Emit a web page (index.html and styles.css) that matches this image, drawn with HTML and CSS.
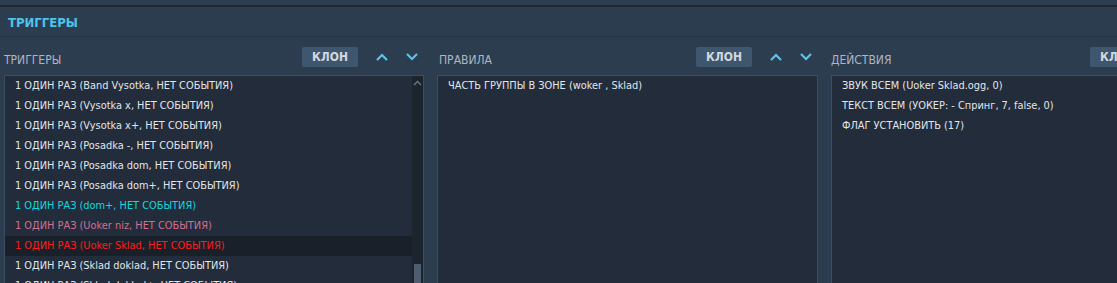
FILE: index.html
```html
<!DOCTYPE html>
<html>
<head>
<meta charset="utf-8">
<link rel="stylesheet" href="styles.css">
</head>
<body>
<div class="topstrip"></div>
<div class="titlebar"><span class="title">ТРИГГЕРЫ</span></div>
<div class="columns">
  <section class="col col-left">
    <div class="colhead">
      <span class="label">ТРИГГЕРЫ</span>
      <button class="clone">КЛОН</button>
      <span class="chev"><svg width="12" height="8" viewBox="0 0 12 8"><path d="M1 7 L6 2 L11 7" fill="none" stroke="#5cc4e6" stroke-width="2.2"/></svg></span>
      <span class="chev"><svg width="12" height="8" viewBox="0 0 12 8"><path d="M1 1 L6 6 L11 1" fill="none" stroke="#5cc4e6" stroke-width="2.2"/></svg></span>
    </div>
    <div class="box box-scroll">
      <ul class="list">
        <li>1 ОДИН РАЗ (Band Vysotka, НЕТ СОБЫТИЯ)</li>
        <li>1 ОДИН РАЗ (Vysotka x, НЕТ СОБЫТИЯ)</li>
        <li>1 ОДИН РАЗ (Vysotka x+, НЕТ СОБЫТИЯ)</li>
        <li>1 ОДИН РАЗ (Posadka -, НЕТ СОБЫТИЯ)</li>
        <li>1 ОДИН РАЗ (Posadka dom, НЕТ СОБЫТИЯ)</li>
        <li>1 ОДИН РАЗ (Posadka dom+, НЕТ СОБЫТИЯ)</li>
        <li class="cyan">1 ОДИН РАЗ (dom+, НЕТ СОБЫТИЯ)</li>
        <li class="pink">1 ОДИН РАЗ (Uoker niz, НЕТ СОБЫТИЯ)</li>
        <li class="red selected">1 ОДИН РАЗ (Uoker Sklad, НЕТ СОБЫТИЯ)</li>
        <li>1 ОДИН РАЗ (Sklad doklad, НЕТ СОБЫТИЯ)</li>
        <li>1 ОДИН РАЗ (Sklad doklad+, НЕТ СОБЫТИЯ)</li>
      </ul>
      <div class="scrollbar">
        <svg class="sb-up" width="9" height="6" viewBox="0 0 9 6"><path d="M1 5 L4.5 1.5 L8 5" fill="none" stroke="#6b7888" stroke-width="1.3"/></svg>
        <div class="thumb"></div>
      </div>
    </div>
  </section>
  <section class="col col-mid">
    <div class="colhead">
      <span class="label">ПРАВИЛА</span>
      <button class="clone">КЛОН</button>
      <span class="chev"><svg width="12" height="8" viewBox="0 0 12 8"><path d="M1 7 L6 2 L11 7" fill="none" stroke="#5cc4e6" stroke-width="2.2"/></svg></span>
      <span class="chev"><svg width="12" height="8" viewBox="0 0 12 8"><path d="M1 1 L6 6 L11 1" fill="none" stroke="#5cc4e6" stroke-width="2.2"/></svg></span>
    </div>
    <div class="box">
      <ul class="list">
        <li>ЧАСТЬ ГРУППЫ В ЗОНЕ (woker , Sklad)</li>
      </ul>
    </div>
  </section>
  <section class="col col-right">
    <div class="colhead">
      <span class="label">ДЕЙСТВИЯ</span>
      <button class="clone">КЛОН</button>
      <span class="chev"><svg width="12" height="8" viewBox="0 0 12 8"><path d="M1 7 L6 2 L11 7" fill="none" stroke="#5cc4e6" stroke-width="2.2"/></svg></span>
      <span class="chev"><svg width="12" height="8" viewBox="0 0 12 8"><path d="M1 1 L6 6 L11 1" fill="none" stroke="#5cc4e6" stroke-width="2.2"/></svg></span>
    </div>
    <div class="box">
      <ul class="list">
        <li>ЗВУК ВСЕМ (Uoker Sklad.ogg, 0)</li>
        <li>ТЕКСТ ВСЕМ (УОКЕР: - Спринг, 7, false, 0)</li>
        <li>ФЛАГ УСТАНОВИТЬ (17)</li>
      </ul>
    </div>
  </section>
</div>
</body>
</html>
```
FILE: styles.css
```css
html, body {
  margin: 0;
  padding: 0;
  background: #2d3d50;
  overflow: hidden;
  width: 1117px;
  height: 283px;
  font-family: "DejaVu Sans Condensed", "DejaVu Sans", sans-serif;
}

.topstrip {
  height: 5px;
  background: #2e3e51;
  border-bottom: 2px solid #1e2630;
}

.titlebar {
  height: 29px;
  display: flex;
  align-items: center;
  padding-left: 8px;
  border-bottom: 1px solid #253140;
}

.title {
  color: #4fc3ea;
  font-weight: bold;
  font-size: 13px;
  padding-top: 1px;
}

.columns {
  display: flex;
  gap: 13px;
  padding-left: 4px;
  width: 1113px;
  height: 246px;
  overflow: hidden;
}

.col {
  flex: none;
  display: flex;
  flex-direction: column;
}

.col-left { width: 420px; }
.col-mid { width: 381px; }
.col-right { width: 381px; }

.colhead {
  flex: none;
  height: 38px;
  display: flex;
  align-items: center;
  padding-top: 1px;
  box-sizing: border-box;
}

.label {
  flex: 1;
  color: #aeb7c1;
  font-size: 12px;
  padding-top: 6px;
}
.col-mid .label { padding-left: 2px; }

.clone {
  flex: none;
  width: 56px;
  height: 20px;
  background: #3f566f;
  border: none;
  border-radius: 2px;
  color: #d2d8de;
  font-family: "DejaVu Sans Condensed", "DejaVu Sans", sans-serif;
  font-weight: bold;
  font-size: 12px;
  padding: 0;
  margin-right: 18px;
}

.chev {
  flex: none;
  width: 12px;
  display: flex;
  justify-content: center;
  padding-top: 1px;
  margin-right: 18px;
}
.chev:last-child { margin-right: 6px; }

.box {
  flex: none;
  height: 300px;
  background: #222c3a;
  border: 1px solid #3b4e64;
  display: flex;
}

.list {
  list-style: none;
  margin: 0;
  padding: 0;
  flex: 1;
}

.list li {
  height: 20px;
  line-height: 20px;
  padding-left: 10px;
  color: #e2e6ea;
  font-size: 10.9px;
  white-space: nowrap;
}

.list li.cyan { color: #14d6df; }
.list li.pink { color: #d26f93; }
.list li.red { color: #ff1c1c; }
.list li.selected { background: #1a2029; }

.scrollbar {
  width: 11px;
  background: #1c242e;
  display: flex;
  flex-direction: column;
  align-items: center;
  position: relative;
}

.sb-up {
  margin-top: 4px;
}

.thumb {
  position: absolute;
  top: 188px;
  left: 2px;
  width: 7px;
  height: 40px;
  background: #4e5d70;
}
```
